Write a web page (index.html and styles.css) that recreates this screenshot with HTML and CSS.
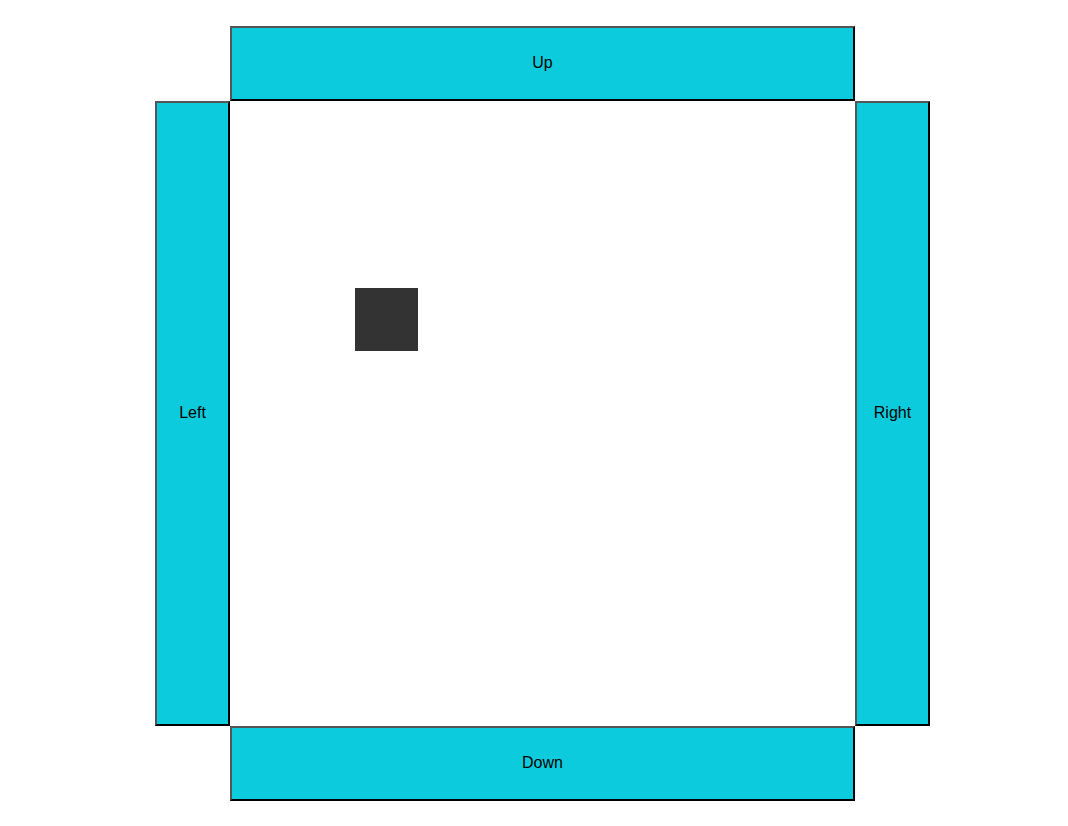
FILE: index.html
```html
<!DOCTYPE html>
<html lang="en">
<head>
  <meta charset="UTF-8">
  <meta name="viewport" content="width=device-width, initial-scale=1.0">
  <title>Move the Square</title>
  <link rel="stylesheet" href="styles.css">
</head>
<body>
  <div class="pad">
    <button class="btn up">Up</button>
    <button class="btn left">Left</button>
    <div class="board">
      <div class="square"></div>
    </div>
    <button class="btn right">Right</button>
    <button class="btn down">Down</button>
  </div>
</body>
</html>
```

FILE: styles.css
```css
body {
  margin: 0;
  background: #fff;
  font-family: "Liberation Sans", Arial, sans-serif;
}
.pad {
  display: grid;
  grid-template-columns: 75px 625px 75px;
  grid-template-rows: 75px 625px 75px;
  margin: 26px 0 0 155px;
  width: 775px;
}
.btn {
  background: #0ccbdc;
  color: #000;
  font-family: "Liberation Sans", Arial, sans-serif;
  font-size: 16px;
  border: 2px solid;
  border-color: #555 #000 #000 #555;
  padding: 0 0 2px 0;
  margin: 0;
  cursor: pointer;
}
.up {
  grid-column: 2;
  grid-row: 1;
}
.left {
  grid-column: 1;
  grid-row: 2;
}
.board {
  grid-column: 2;
  grid-row: 2;
  position: relative;
}
.right {
  grid-column: 3;
  grid-row: 2;
}
.down {
  grid-column: 2;
  grid-row: 3;
}
.square {
  position: absolute;
  left: 125px;
  top: 187px;
  width: 62.5px;
  height: 62.5px;
  background: #333;
}
```
